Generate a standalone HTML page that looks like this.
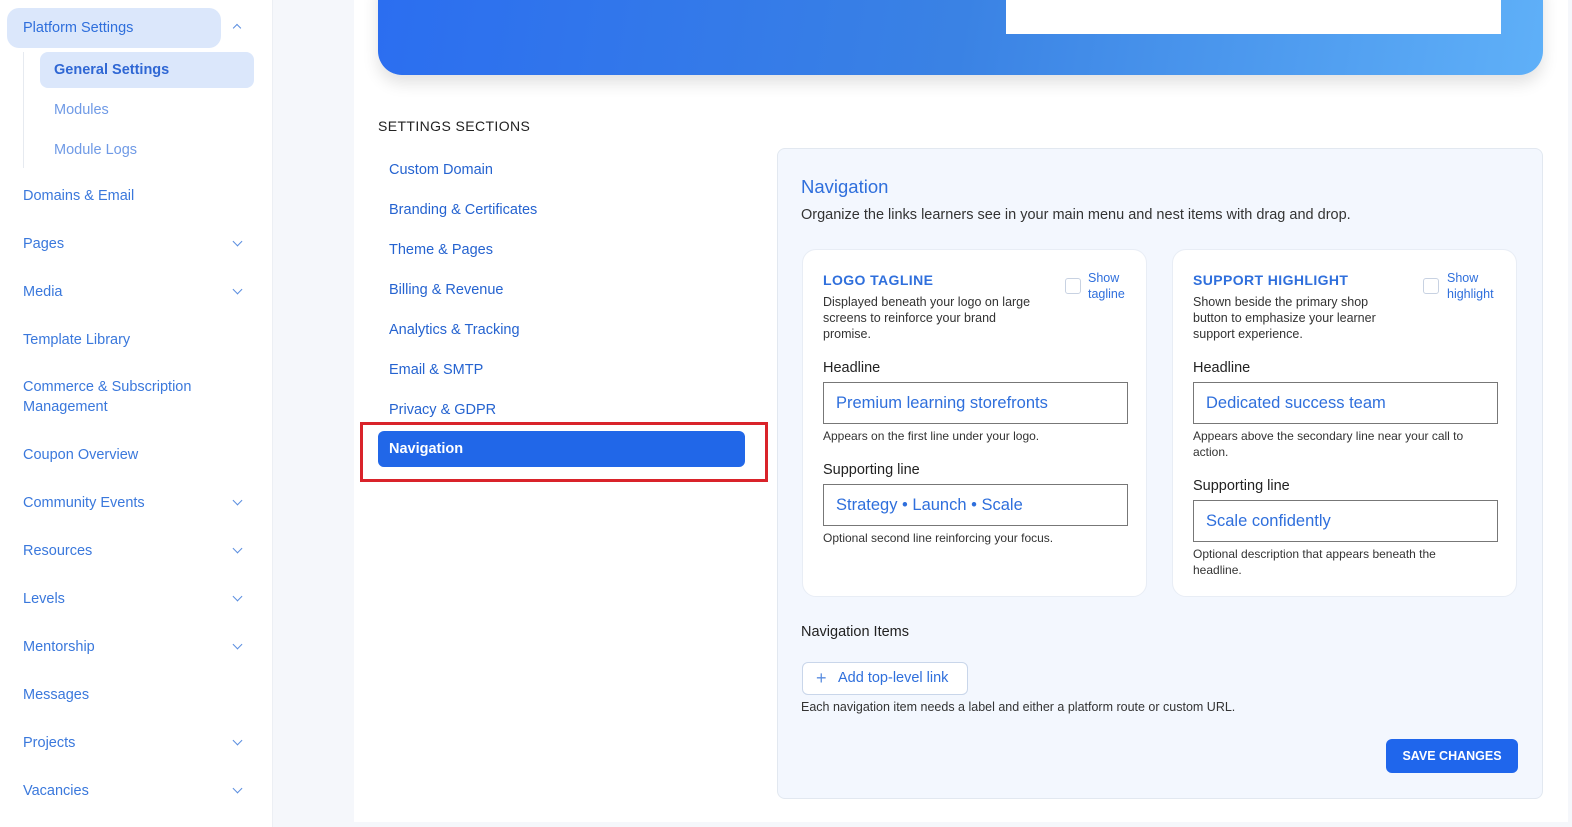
<!DOCTYPE html>
<html><head><meta charset="utf-8"><style>
*{box-sizing:border-box;margin:0;padding:0}
body{width:1572px;height:827px;overflow:hidden;background:#f5f7fb;font-family:"Liberation Sans",sans-serif;position:relative}
.a{position:absolute;white-space:nowrap}
.sb{left:0;top:0;width:273px;height:827px;background:#fff;border-right:1px solid #eceff4}
.si{position:absolute;left:23px;font-size:14.5px;color:#3a78dc}
.chev{position:absolute;left:234px;width:7px;height:7px;border-right:1.5px solid #5b8ee0;border-bottom:1.5px solid #5b8ee0;transform:rotate(45deg)}
.main{left:354px;top:0;width:1214px;height:822px;background:#fff}
.nav{position:absolute;left:389px;font-size:14.5px;color:#2563d0}
.card{position:absolute;top:249px;width:345px;height:348px;background:#fff;border-radius:14px;border:1px solid #e8edf5}
.ct{position:absolute;left:20px;top:22px;font-size:14px;font-weight:bold;color:#2f6fdc;letter-spacing:.4px}
.cd{position:absolute;left:20px;top:44px;font-size:12.5px;line-height:16px;color:#333;width:215px;white-space:normal}
.cb{position:absolute;left:262px;top:28px;width:16px;height:16px;border:1px solid #c8d2e2;border-radius:3px;background:#fff}
.cl{position:absolute;left:285px;top:20px;font-size:12.5px;line-height:16px;color:#2f6fdc}
.lb{position:absolute;left:20px;font-size:14.5px;color:#222}
.in{position:absolute;left:20px;width:305px;height:42px;border:1px solid #777;font-size:16.5px;color:#2f6fdc;padding:11px 12px}
.hp{position:absolute;left:20px;font-size:12px;line-height:16px;color:#333;width:290px;white-space:normal}
</style></head><body>
<div class="a sb">
 <div style="position:absolute;left:7px;top:8px;width:214px;height:40px;background:#dbe7fb;border-radius:12px"></div>
 <div class="si" style="top:20px;color:#2f6fdc">Platform Settings</div>
 <div class="chev" style="top:25px;transform:rotate(-135deg);width:6px;height:6px"></div>
 <div style="position:absolute;left:23px;top:52px;width:1px;height:116px;background:#e6eaf0"></div>
 <div style="position:absolute;left:40px;top:52px;width:214px;height:36px;background:#dbe7fb;border-radius:8px"></div>
 <div class="si" style="left:54px;top:62px;font-weight:bold;color:#2f67d4">General Settings</div>
 <div class="si" style="left:54px;top:102px;color:#6f9ae6">Modules</div>
 <div class="si" style="left:54px;top:142px;color:#6f9ae6">Module Logs</div>
 <div class="si" style="top:188px">Domains &amp; Email</div>
 <div class="si" style="top:236px">Pages</div><div class="chev" style="top:238px"></div>
 <div class="si" style="top:284px">Media</div><div class="chev" style="top:286px"></div>
 <div class="si" style="top:332px">Template Library</div>
 <div class="si" style="line-height:20px;top:377px">Commerce &amp; Subscription<br>Management</div>
 <div class="si" style="top:447px">Coupon Overview</div>
 <div class="si" style="top:495px">Community Events</div><div class="chev" style="top:497px"></div>
 <div class="si" style="top:543px">Resources</div><div class="chev" style="top:545px"></div>
 <div class="si" style="top:591px">Levels</div><div class="chev" style="top:593px"></div>
 <div class="si" style="top:639px">Mentorship</div><div class="chev" style="top:641px"></div>
 <div class="si" style="top:687px">Messages</div>
 <div class="si" style="top:735px">Projects</div><div class="chev" style="top:737px"></div>
 <div class="si" style="top:783px">Vacancies</div><div class="chev" style="top:785px"></div>
</div>
<div class="a main"></div>
<div class="a" style="left:378px;top:-20px;width:1165px;height:95px;border-radius:0 0 24px 24px;background:linear-gradient(100deg,#2b6ef0 0%,#3a82e4 50%,#5fb0f8 100%);box-shadow:0 8px 16px rgba(0,0,0,.12)"></div>
<div class="a" style="left:1006px;top:0;width:495px;height:34px;background:#fff"></div>
<div class="a" style="left:378px;top:118px;font-size:14px;color:#222;letter-spacing:.4px">SETTINGS SECTIONS</div>
<div class="nav" style="top:162px">Custom Domain</div>
<div class="nav" style="top:202px">Branding &amp; Certificates</div>
<div class="nav" style="top:242px">Theme &amp; Pages</div>
<div class="nav" style="top:282px">Billing &amp; Revenue</div>
<div class="nav" style="top:322px">Analytics &amp; Tracking</div>
<div class="nav" style="top:362px">Email &amp; SMTP</div>
<div class="nav" style="top:402px">Privacy &amp; GDPR</div>
<div class="a" style="left:360px;top:422px;width:408px;height:60px;border:3px solid #d9232a"></div>
<div class="a" style="left:378px;top:431px;width:367px;height:36px;background:#2167e8;border-radius:6px"></div>
<div class="nav" style="top:441px;color:#fff;font-weight:bold">Navigation</div>
<div class="a" style="left:777px;top:148px;width:766px;height:651px;background:#f3f7fe;border:1px solid #e2e8f0;border-radius:8px"></div>
<div class="a" style="left:801px;top:176px;font-size:18.5px;color:#2f6fdc">Navigation</div>
<div class="a" style="left:801px;top:207px;font-size:14.5px;color:#333">Organize the links learners see in your main menu and nest items with drag and drop.</div>
<div class="card" style="left:802px">
 <div class="ct">LOGO TAGLINE</div>
 <div class="cd">Displayed beneath your logo on large screens to reinforce your brand promise.</div>
 <div class="cb"></div><div class="cl">Show<br>tagline</div>
 <div class="lb" style="top:110px">Headline</div>
 <div class="in" style="top:132px">Premium learning storefronts</div>
 <div class="hp" style="top:178px">Appears on the first line under your logo.</div>
 <div class="lb" style="top:212px">Supporting line</div>
 <div class="in" style="top:234px">Strategy • Launch • Scale</div>
 <div class="hp" style="top:280px">Optional second line reinforcing your focus.</div>
</div>
<div class="card" style="left:1172px">
 <div class="ct">SUPPORT HIGHLIGHT</div>
 <div class="cd" style="width:205px">Shown beside the primary shop button to emphasize your learner support experience.</div>
 <div class="cb" style="left:250px"></div><div class="cl" style="left:274px">Show<br>highlight</div>
 <div class="lb" style="top:110px">Headline</div>
 <div class="in" style="top:132px">Dedicated success team</div>
 <div class="hp" style="top:178px;width:285px">Appears above the secondary line near your call to action.</div>
 <div class="lb" style="top:228px">Supporting line</div>
 <div class="in" style="top:250px">Scale confidently</div>
 <div class="hp" style="top:296px;width:270px">Optional description that appears beneath the headline.</div>
</div>
<div class="a" style="left:801px;top:624px;font-size:14.5px;color:#222">Navigation Items</div>
<div class="a" style="left:802px;top:662px;width:166px;height:33px;border:1px solid #c9d6ea;border-radius:6px;background:#fff"></div>
<div class="a" style="left:816px;top:668px;font-size:18px;color:#5b8ee0">+</div>
<div class="a" style="left:838px;top:670px;font-size:14.5px;color:#2f6fdc">Add top-level link</div>
<div class="a" style="left:801px;top:700px;font-size:12.5px;color:#333">Each navigation item needs a label and either a platform route or custom URL.</div>
<div class="a" style="left:1386px;top:739px;width:132px;height:34px;background:#1f66ec;border-radius:6px;color:#fff;font-size:12.5px;font-weight:bold;text-align:center;line-height:34px">SAVE CHANGES</div>
</body></html>
